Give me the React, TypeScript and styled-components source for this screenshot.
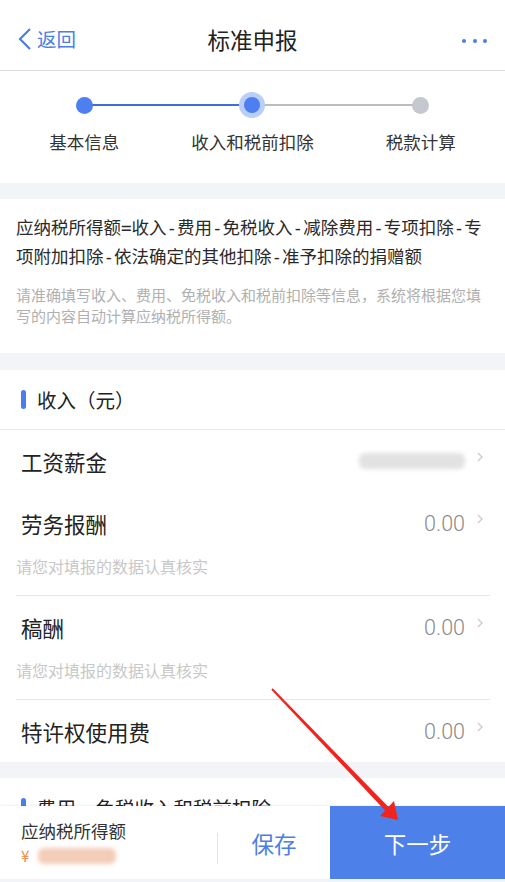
import { createGlobalStyle, styled } from "styled-components"

const GlobalStyle = createGlobalStyle`
  html, body {
    margin: 0;
    padding: 0;
    background: #f3f4f8;
  }
  body {
    font-family: "Noto Sans CJK SC", "Noto Sans", sans-serif;
    color: #333;
  }
  * { box-sizing: border-box; }
`

const BLUE = "#4a7ee8"

const Page = styled.div`
  position: relative;
  width: 505px;
  height: 882px;
  overflow: hidden;
  background: #f3f4f8;
`

const NavBar = styled.div`
  height: 71px;
  background: #fff;
  border-bottom: 1px solid #dedede;
  display: grid;
  grid-template-columns: 1fr auto 1fr;
  align-items: center;
  padding: 7px 18px 0 18px;
`

const BackLink = styled.div`
  display: flex;
  align-items: center;
  gap: 5px;
  color: ${BLUE};
  font-size: 19.5px;
`

const Title = styled.div`
  font-size: 22.5px;
  color: #222;
`

const MoreDots = styled.div`
  justify-self: end;
  display: flex;
  gap: 6.5px;
  padding-top: 5px;
  span {
    width: 4px;
    height: 4px;
    border-radius: 50%;
    background: ${BLUE};
  }
`

const Steps = styled.div`
  background: #fff;
  height: 112px;
  display: grid;
  grid-template-columns: repeat(3, 1fr);
  padding-top: 23px;
  margin-bottom: 16px;
`

const Step = styled.div`
  display: flex;
  flex-direction: column;
  align-items: center;
  gap: 13px;
`

const Track = styled.div<{ $left?: string; $right?: string }>`
  position: relative;
  width: 100%;
  height: 22px;
  display: flex;
  align-items: center;
  justify-content: center;
  &::before, &::after {
    content: "";
    position: absolute;
    top: 10px;
    height: 1.5px;
  }
  &::before {
    left: 0;
    right: 50%;
    background: ${(p) => p.$left ?? "transparent"};
  }
  &::after {
    left: 50%;
    right: 0;
    background: ${(p) => p.$right ?? "transparent"};
  }
`

const Dot = styled.div<{ $color: string; $halo?: boolean }>`
  position: relative;
  z-index: 1;
  width: ${(p) => (p.$halo ? 16 : 17)}px;
  height: ${(p) => (p.$halo ? 16 : 17)}px;
  border-radius: 50%;
  background: ${(p) => p.$color};
  box-shadow: ${(p) => (p.$halo ? "0 0 0 5px #b9cff7" : "none")};
`

const StepLabel = styled.div`
  font-size: 17.5px;
  color: #333;
`

const FormulaCard = styled.div`
  background: #fff;
  padding: 15px 16px 27px 16px;
  margin-bottom: 17px;
`

const Formula = styled.div`
  font-family: "DejaVu Sans Mono", "Noto Sans CJK SC", monospace;
  font-size: 17.5px;
  line-height: 29px;
  color: #2a2a2a;
`

const FormulaHint = styled.div`
  margin-top: 12px;
  font-size: 15px;
  line-height: 21px;
  color: #b0b0b0;
`

const Section = styled.div`
  background: #fff;
  margin-bottom: 16px;
`

const SectionHeader = styled.div`
  height: 60px;
  display: flex;
  align-items: center;
  gap: 11px;
  padding-left: 21px;
  font-size: 19.5px;
  color: #222;
  border-bottom: 1px solid #e8e8e8;
  &::before {
    content: "";
    width: 5px;
    height: 19px;
    border-radius: 2.5px;
    background: ${BLUE};
  }
`

const Item = styled.div<{ $divided?: boolean }>`
  margin: 0 15px 0 16px;
  border-top: ${(p) => (p.$divided ? "1px solid #e6e6e6" : "none")};
  padding-left: 5px;
`

const ItemRow = styled.div`
  height: 62px;
  display: flex;
  align-items: center;
  justify-content: space-between;
  padding-right: 7px;
`

const ItemLabel = styled.div`
  font-size: 21.5px;
  color: #222;
`

const ItemValue = styled.div`
  display: flex;
  align-items: center;
  gap: 12px;
  font-family: "Roboto", "Noto Sans", sans-serif;
  font-size: 21.5px;
  font-weight: 300;
  color: #8a8a8a;
  svg {
    transform: translateY(-4px);
  }
`

const Blurred = styled.div<{ $w: number; $tone: string }>`
  width: ${(p) => p.$w}px;
  height: 16px;
  border-radius: 6px;
  background: ${(p) => p.$tone};
  filter: blur(2px);
`

const ItemHint = styled.div`
  font-size: 16px;
  line-height: 20px;
  color: #c8c8c8;
  margin: 2px 0 0 -5px;
  padding-bottom: 19px;
`

const BottomBar = styled.div`
  position: absolute;
  left: 0;
  right: 0;
  bottom: 3px;
  height: 73px;
  background: #fff;
  display: flex;
  align-items: stretch;
  box-shadow: 0 -1px 2px rgba(0, 0, 0, 0.06);
`

const Summary = styled.div`
  width: 217px;
  padding: 12px 0 0 21px;
  display: flex;
  flex-direction: column;
  gap: 2px;
`

const SummaryLabel = styled.div`
  font-size: 17.5px;
  color: #333;
`

const SummaryValue = styled.div`
  display: flex;
  align-items: center;
  gap: 9px;
  font-size: 15px;
  color: #f08a3c;
`

const VDivider = styled.div`
  width: 1px;
  align-self: center;
  height: 31px;
  margin-top: 12px;
  background: #e4e4e4;
`

const SaveButton = styled.div`
  width: 112px;
  display: flex;
  align-items: center;
  justify-content: center;
  font-size: 22.5px;
  color: ${BLUE};
  padding-top: 1px;
`

const NextButton = styled.div`
  flex: 1;
  background: #4d80e9;
  color: #fff;
  display: flex;
  align-items: center;
  justify-content: center;
  font-size: 22.5px;
  padding-top: 1px;
`

const Chevron = ({ color = "#c8c8c8" }: { color?: string }) => (
  <svg width="6" height="10" viewBox="0 0 6 10">
    <polyline points="1,1 5,5 1,9" fill="none" stroke={color} strokeWidth="1.2" />
  </svg>
)

const ArrowOverlay = styled.svg`
  position: absolute;
  left: 0;
  top: 0;
  pointer-events: none;
`

const incomeItems = [
  { label: "工资薪金", value: null, hint: false },
  { label: "劳务报酬", value: "0.00", hint: true },
  { label: "稿酬", value: "0.00", hint: true },
  { label: "特许权使用费", value: "0.00", hint: false },
]

export default function App() {
  return (
    <Page>
      <GlobalStyle />
      <NavBar>
        <BackLink>
          <svg width="14" height="24" viewBox="0 0 14 24">
            <polyline points="12,2 2,12 12,22" fill="none" stroke={BLUE} strokeWidth="2.2" />
          </svg>
          返回
        </BackLink>
        <Title>标准申报</Title>
        <MoreDots>
          <span />
          <span />
          <span />
        </MoreDots>
      </NavBar>

      <Steps>
        <Step>
          <Track $right="#3c6fd9">
            <Dot $color="#4d7ff0" />
          </Track>
          <StepLabel>基本信息</StepLabel>
        </Step>
        <Step>
          <Track $left="#3c6fd9" $right="#bdbdbd">
            <Dot $color="#4d7ff0" $halo />
          </Track>
          <StepLabel>收入和税前扣除</StepLabel>
        </Step>
        <Step>
          <Track $left="#bdbdbd">
            <Dot $color="#c6c8d0" />
          </Track>
          <StepLabel>税款计算</StepLabel>
        </Step>
      </Steps>

      <FormulaCard>
        <Formula>
          应纳税所得额=收入-费用-免税收入-减除费用-专项扣除-专项附加扣除-依法确定的其他扣除-准予扣除的捐赠额
        </Formula>
        <FormulaHint>
          请准确填写收入、费用、免税收入和税前扣除等信息，系统将根据您填写的内容自动计算应纳税所得额。
        </FormulaHint>
      </FormulaCard>

      <Section>
        <SectionHeader>收入（元）</SectionHeader>
        {incomeItems.map((item, i) => (
          <Item key={item.label} $divided={i > 1}>
            <ItemRow>
              <ItemLabel>{item.label}</ItemLabel>
              <ItemValue>
                {item.value ?? <Blurred $w={106} $tone="#e2e2e2" />}
                <Chevron />
              </ItemValue>
            </ItemRow>
            {item.hint && <ItemHint>请您对填报的数据认真核实</ItemHint>}
          </Item>
        ))}
      </Section>

      <Section>
        <SectionHeader>费用、免税收入和税前扣除</SectionHeader>
      </Section>

      <BottomBar>
        <Summary>
          <SummaryLabel>应纳税所得额</SummaryLabel>
          <SummaryValue>
            ¥<Blurred $w={78} $tone="#f3cdb8" />
          </SummaryValue>
        </Summary>
        <VDivider />
        <SaveButton>保存</SaveButton>
        <NextButton>下一步</NextButton>
      </BottomBar>

      <ArrowOverlay width="505" height="882" viewBox="0 0 505 882">
        <polygon points="271.3,689.7 272.7,688.3 389.8,808.3 386.2,811.7" fill="#f2231d" />
        <polygon points="398,820 380,816 394,801" fill="#f2231d" />
      </ArrowOverlay>
    </Page>
  )
}
